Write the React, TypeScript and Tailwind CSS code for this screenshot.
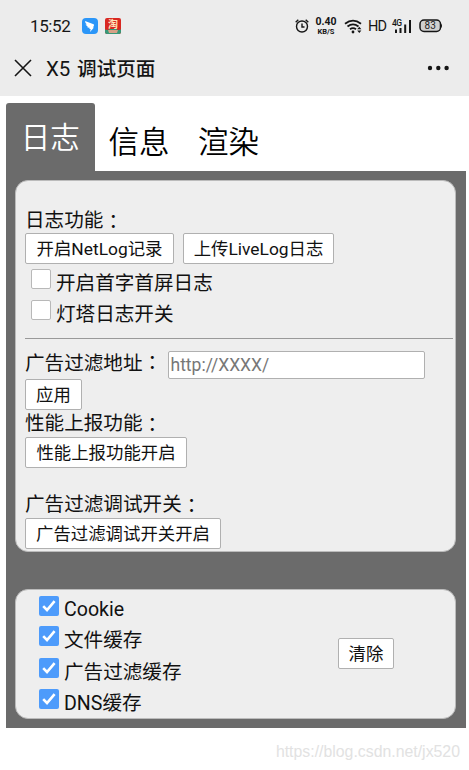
import type { ReactNode } from "react";

function Btn({ className, children }: { className: string; children: ReactNode }) {
  return (
    <button
      type="button"
      className={`flex h-[31px] shrink-0 items-center justify-center whitespace-nowrap rounded-[2px] border-[1.5px] border-[#b0b0b0] bg-white pt-[2px] text-[17.4px] leading-none text-[#111] ${className}`}
    >
      {children}
    </button>
  );
}

function Colon() {
  return <span className="font-['Noto_Sans_CJK_TC',sans-serif]">：</span>;
}

function Box({ checked = false }: { checked?: boolean }) {
  return checked ? (
    <span className="flex size-[20px] shrink-0 items-center justify-center rounded-[2px] bg-[#4d9bfb]">
      <svg viewBox="0 0 20 20" className="size-[20px]" fill="none" stroke="#fff" strokeWidth="2.6">
        <path d="M4.2 10.2 8 14 15.6 5.2" />
      </svg>
    </span>
  ) : (
    <span className="size-[20px] shrink-0 rounded-[2px] border-[1.5px] border-[#b8b8b8] bg-white" />
  );
}

function StatusBar() {
  return (
    <div className="flex h-[52px] items-center pl-[30px] text-[#151515]">
      <span className="w-[51px] text-[17px] leading-none tracking-[-0.4px]">15:52</span>
      <svg className="h-[18px] w-[41px]" viewBox="0 0 41 18">
        <rect x="1" y="1" width="16" height="16" rx="4" fill="#2b96f8" />
        <path d="M4 4 12.6 7.3Q13.5 8 12.7 9.2L11.8 10.5H13L9 15 9.7 12H8.3L8.7 10.8Q6.5 11 6 9.8L7 9.6Q4.8 8.7 4.6 7.3L6 7.6Q4 6 4 4Z" fill="#fff" />
        <rect x="24" y="1" width="16" height="16" rx="2" fill="#d92822" />
        <path d="M24 12.5 27 13 29 12H35L37 13 40 12.5V15Q40 17 38 17H26Q24 17 24 15Z" fill="#379878" />
        <path d="M27 13H37L36 16H28Z" fill="#d7a187" />
        <text x="32" y="10.5" textAnchor="middle" fontSize="10" fontWeight="700" fill="#ffe4bb" className="font-['Noto_Sans_CJK_SC',sans-serif]">淘</text>
      </svg>
      <svg className="ml-[173px] size-[14px]" viewBox="0 0 14 14" fill="none" stroke="#151515" strokeWidth="1.4">
        <circle cx="7" cy="7.5" r="5.5" />
        <path d="M7 4.5V8H9.5M.7 3.3 3.3.8M10.7.8 13.3 3.3" />
      </svg>
      <div className="ml-[5px] flex w-[24px] flex-col items-center font-bold">
        <span className="pt-px text-[10.5px] leading-[10px]">0.40</span>
        <span className="pt-px text-[7.5px] leading-[8px]">KB/S</span>
      </div>
      <svg className="ml-[6px] h-[15px] w-[19px]" viewBox="0 0 19 15" fill="none" stroke="#151515" strokeWidth="1.8">
        <path d="M1 4.7Q9 -1.5 17 4.7M3.5 7.5Q9 3.2 14.5 7.5M6 10.2Q9 8 12 10.2" />
        <circle cx="9" cy="13" r="1.4" fill="#151515" stroke="none" />
        <path d="M13.2 10.3 15.3 7.8 17.4 10.3ZM13.2 11.6H17.4L15.3 14.1Z" fill="#151515" stroke="none" />
      </svg>
      <span className="ml-[5px] w-[18px] pt-[2px] text-[14.5px] leading-none tracking-[-0.8px]">HD</span>
      <svg className="ml-[5px] h-[16px] w-[22px]" viewBox="0 0 22 16" fill="#151515">
        <text x="1" y="8" fontSize="8.5" fontWeight="500" letterSpacing="-.6">4G</text>
        <path d="M4 11.5H6V15H4ZM8.5 10H10.5V15H8.5ZM13.2 6.5H15.2V15H13.2ZM18 2H20V15H18Z" />
      </svg>
      <svg className="ml-[6px] h-[14px] w-[24px]" viewBox="0 0 24 14">
        <rect x="1" y="1" width="20.5" height="11.5" rx="4" fill="#d0d0d0" stroke="#151515" strokeWidth="1.5" />
        <path d="M22 4.5Q24 6.8 22 9Z" fill="#151515" />
        <text x="11.2" y="10.3" textAnchor="middle" fontSize="10" fill="#222">83</text>
      </svg>
    </div>
  );
}

function TitleBar() {
  return (
    <div className="flex h-[44px] items-start pl-[14px] pt-[4px] text-[#151515]">
      <svg className="mt-[3px] size-[18px]" viewBox="0 0 18 18" fill="none" stroke="#151515" strokeWidth="1.6">
        <path d="m1 1 16 16M17 1 1 17" />
      </svg>
      <h1 className="ml-[14px] w-[381px] pt-px text-[19.6px] font-medium leading-[25px]">
        <span className="inline-block w-[31px] text-[20.5px] font-normal">X5</span>调试页面
      </h1>
      <svg className="mt-[9px] h-[6px] w-[23px] shrink-0" viewBox="0 0 23 6" fill="#151515">
        <circle cx="3" cy="3" r="2.2" />
        <circle cx="11.3" cy="3" r="2.2" />
        <circle cx="19.6" cy="3" r="2.2" />
      </svg>
    </div>
  );
}

const caches = [
  { name: "Cookie", row: "h-[30px]", text: "pt-[4px]" },
  { name: "文件缓存", row: "h-[32px]", text: "pt-[5px]" },
  { name: "广告过滤缓存", row: "h-[31px]", text: "pt-[5px]" },
  { name: "DNS缓存", row: "h-[30px]", text: "pt-[5px]" },
];

export default function App() {
  return (
    <div className="flex h-[770px] w-[469px] flex-col overflow-hidden bg-white font-['Roboto','Noto_Sans_CJK_SC',sans-serif] text-[19.6px] leading-none text-[#111]">
      <header className="h-[96px] shrink-0 bg-[#ececec]">
        <StatusBar />
        <TitleBar />
      </header>

      <nav className="flex h-[75px] shrink-0 items-end pl-[5.5px] text-[30.5px] font-[350] text-black">
        <div className="flex h-[68px] w-[89.5px] justify-center rounded-t-[3px] bg-[#6b6b6b] pt-[21px] text-[29.5px] text-white">日志</div>
        <div className="h-[43px] w-[89px] pl-[13.5px]">信息</div>
        <div className="h-[43px] pl-[14px]">渲染</div>
      </nav>

      <main className="ml-[5.5px] h-[557px] w-[460px] shrink-0 bg-[#6b6b6b] px-[9.5px] pt-[9px]">
        <section className="flex h-[372px] w-[441px] flex-col rounded-[13px] border-[1.5px] border-[#bbb] bg-[#eee] pl-[9px] pt-[26px]">
          <div className="flex h-[26px] items-center pt-px">日志功能<Colon /></div>
          <div className="flex h-[33px] gap-[9px]">
            <Btn className="w-[149px]">开启NetLog记录</Btn>
            <Btn className="w-[151px]">上传LiveLog日志</Btn>
          </div>
          <label className="flex h-[31px] gap-[5px] pl-[6px] pt-[3px]">
            <Box /><span className="pt-[5px]">开启首字首屏日志</span>
          </label>
          <label className="flex h-[41px] gap-[5px] pl-[6px] pt-[3px]">
            <Box /><span className="pt-[5px]">灯塔日志开关</span>
          </label>
          <hr className="w-[428px] border-t-[1.5px] border-[#999]" />
          <div className="flex h-[40px] pt-[12px]">
            <span className="w-[143px] pt-px">广告过滤地址<Colon /></span>
            <input className="h-[28px] w-[257px] rounded-[2px] border-[1.5px] border-[#b0b0b0] bg-white px-[1.5px] pb-px text-[17.5px] leading-none outline-none placeholder:text-[#777]" placeholder="http://XXXX/" />
          </div>
          <Btn className="w-[57px]">应用</Btn>
          <div className="flex h-[27px] items-center">性能上报功能<Colon /></div>
          <Btn className="w-[162px]">性能上报功能开启</Btn>
          <div className="flex h-[50px] items-end pb-[3px]">广告过滤调试开关<Colon /></div>
          <Btn className="w-[196px]">广告过滤调试开关开启</Btn>
        </section>

        <section className="mt-[37px] flex h-[130px] w-[441px] rounded-[13px] border-[1.5px] border-[#bbb] bg-[#eee] pl-[23px] pt-[6px]">
          <div className="w-[299px]">
            {caches.map((c) => (
              <label key={c.name} className={`flex gap-[5px] ${c.row}`}>
                <Box checked /><span className={c.text}>{c.name}</span>
              </label>
            ))}
          </div>
          <Btn className="mt-[42px] w-[56px]">清除</Btn>
        </section>
      </main>

      <footer className="pr-[9px] pt-[15px] text-right font-['Liberation_Sans',sans-serif] text-[15.85px] leading-[18px] text-[#e2e2e2]">
        https://blog.csdn.net/jx520
      </footer>
    </div>
  );
}
